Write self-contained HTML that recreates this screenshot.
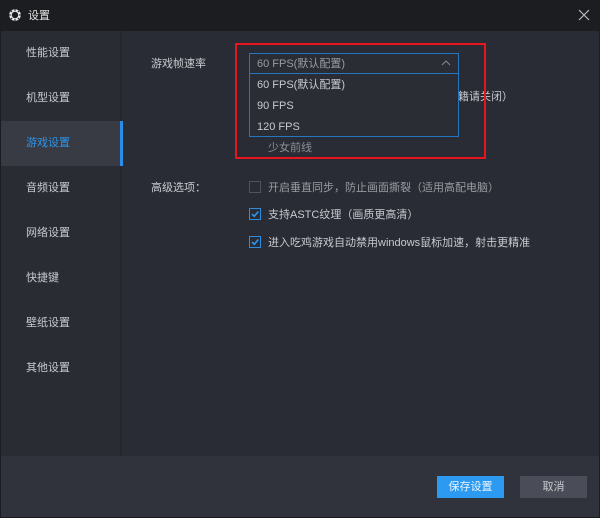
<!DOCTYPE html><html><head><meta charset="utf-8"><style>
body{margin:0;width:600px;height:518px;background:#1a1c20;font-family:"Liberation Sans","Noto Sans CJK SC",sans-serif;position:relative;overflow:hidden;font-size:11px;line-height:15px}
.a{position:absolute}
.t{color:#c8cacf}
</style></head><body>
<div class="a" style="left:1px;top:0;width:598px;height:31px;background:#1c1d21"></div>
<svg class="a" style="left:8px;top:8px" width="14" height="14" viewBox="0 0 14 14"><circle cx="7" cy="7" r="4.5" fill="none" stroke="#e8e8e8" stroke-width="2.6"/><g stroke="#1c1d21" stroke-width="1"><path d="M7 1v2M7 11v2M1 7h2M11 7h2M2.8 2.8l1.4 1.4M9.8 9.8l1.4 1.4M2.8 11.2l1.4-1.4M9.8 4.2l1.4-1.4"/></g></svg>
<div class="a" style="left:28px;top:9px;color:#e6e6e6">设置</div>
<svg class="a" style="left:578px;top:9px" width="12" height="12"><path d="M1 1L11 11M11 1L1 11" stroke="#bbb" stroke-width="1.2"/></svg>
<div class="a" style="left:1px;top:31px;width:120px;height:425px;background:#292c33"></div>
<div class="a" style="left:120px;top:31px;width:2px;height:425px;background:#25272d"></div>
<div class="a" style="left:122px;top:31px;width:477px;height:425px;background:#292c34"></div>
<div class="a" style="left:1px;top:121px;width:119px;height:45px;background:#383b44"></div>
<div class="a" style="left:120px;top:121px;width:3px;height:45px;background:#2a8ee8"></div>
<div class="a t" style="left:26px;top:46px">性能设置</div>
<div class="a t" style="left:26px;top:91px">机型设置</div>
<div class="a" style="left:26px;top:136px;color:#2d95ea">游戏设置</div>
<div class="a t" style="left:26px;top:181px">音频设置</div>
<div class="a t" style="left:26px;top:226px">网络设置</div>
<div class="a t" style="left:26px;top:271px">快捷键</div>
<div class="a t" style="left:26px;top:316px">壁纸设置</div>
<div class="a t" style="left:26px;top:361px">其他设置</div>
<div class="a t" style="left:151px;top:57px">游戏帧速率</div>
<div class="a t" style="left:151px;top:181px">高级选项：</div>
<div class="a t" style="left:458px;top:90px">籍请关闭）</div>
<div class="a" style="left:235px;top:43px;width:251px;height:116px;border:2px solid #e8141e;box-sizing:border-box"></div>
<div class="a" style="left:249px;top:53px;width:210px;height:84px;border:1px solid #2675c0;box-sizing:border-box;background:#2a2d34"></div>
<div class="a" style="left:249px;top:73px;width:210px;height:1px;background:#2675c0"></div>
<div class="a" style="left:257px;top:57px;color:#9a9ca2">60 FPS(默认配置)</div>
<svg class="a" style="left:441px;top:60px" width="10" height="6"><path d="M1 5L5 1L9 5" stroke="#888" fill="none"/></svg>
<div class="a t" style="left:257px;top:78px">60 FPS(默认配置)</div>
<div class="a t" style="left:257px;top:99px">90 FPS</div>
<div class="a t" style="left:257px;top:120px">120 FPS</div>
<div class="a" style="left:268px;top:141px;color:#8d9096">少女前线</div>
<div class="a" style="left:249px;top:181px;width:12px;height:12px;border:1px solid #50535b;box-sizing:border-box"></div>
<div class="a" style="left:268px;top:181px;color:#9a9ca2">开启垂直同步，防止画面撕裂（适用高配电脑）</div>
<div class="a" style="left:249px;top:208px;width:12px;height:12px;border:1px solid #2d8ee0;box-sizing:border-box"></div>
<svg class="a" style="left:250px;top:209px" width="10" height="10"><path d="M2 5L4.3 7.3L8.3 2.5" stroke="#2d95ea" stroke-width="1.6" fill="none"/></svg>
<div class="a t" style="left:268px;top:208px">支持ASTC纹理（画质更高清）</div>
<div class="a" style="left:249px;top:236px;width:12px;height:12px;border:1px solid #2d8ee0;box-sizing:border-box"></div>
<svg class="a" style="left:250px;top:237px" width="10" height="10"><path d="M2 5L4.3 7.3L8.3 2.5" stroke="#2d95ea" stroke-width="1.6" fill="none"/></svg>
<div class="a t" style="left:268px;top:236px">进入吃鸡游戏自动禁用windows鼠标加速，射击更精准</div>
<div class="a" style="left:1px;top:456px;width:598px;height:61px;background:#30333b"></div>
<div class="a" style="left:437px;top:476px;width:67px;height:22px;background:#2b9af0;color:#eaf4ff;text-align:center;line-height:22px">保存设置</div>
<div class="a" style="left:520px;top:476px;width:67px;height:22px;background:#4a4d57;color:#c8cacf;text-align:center;line-height:22px">取消</div>
</body></html>
